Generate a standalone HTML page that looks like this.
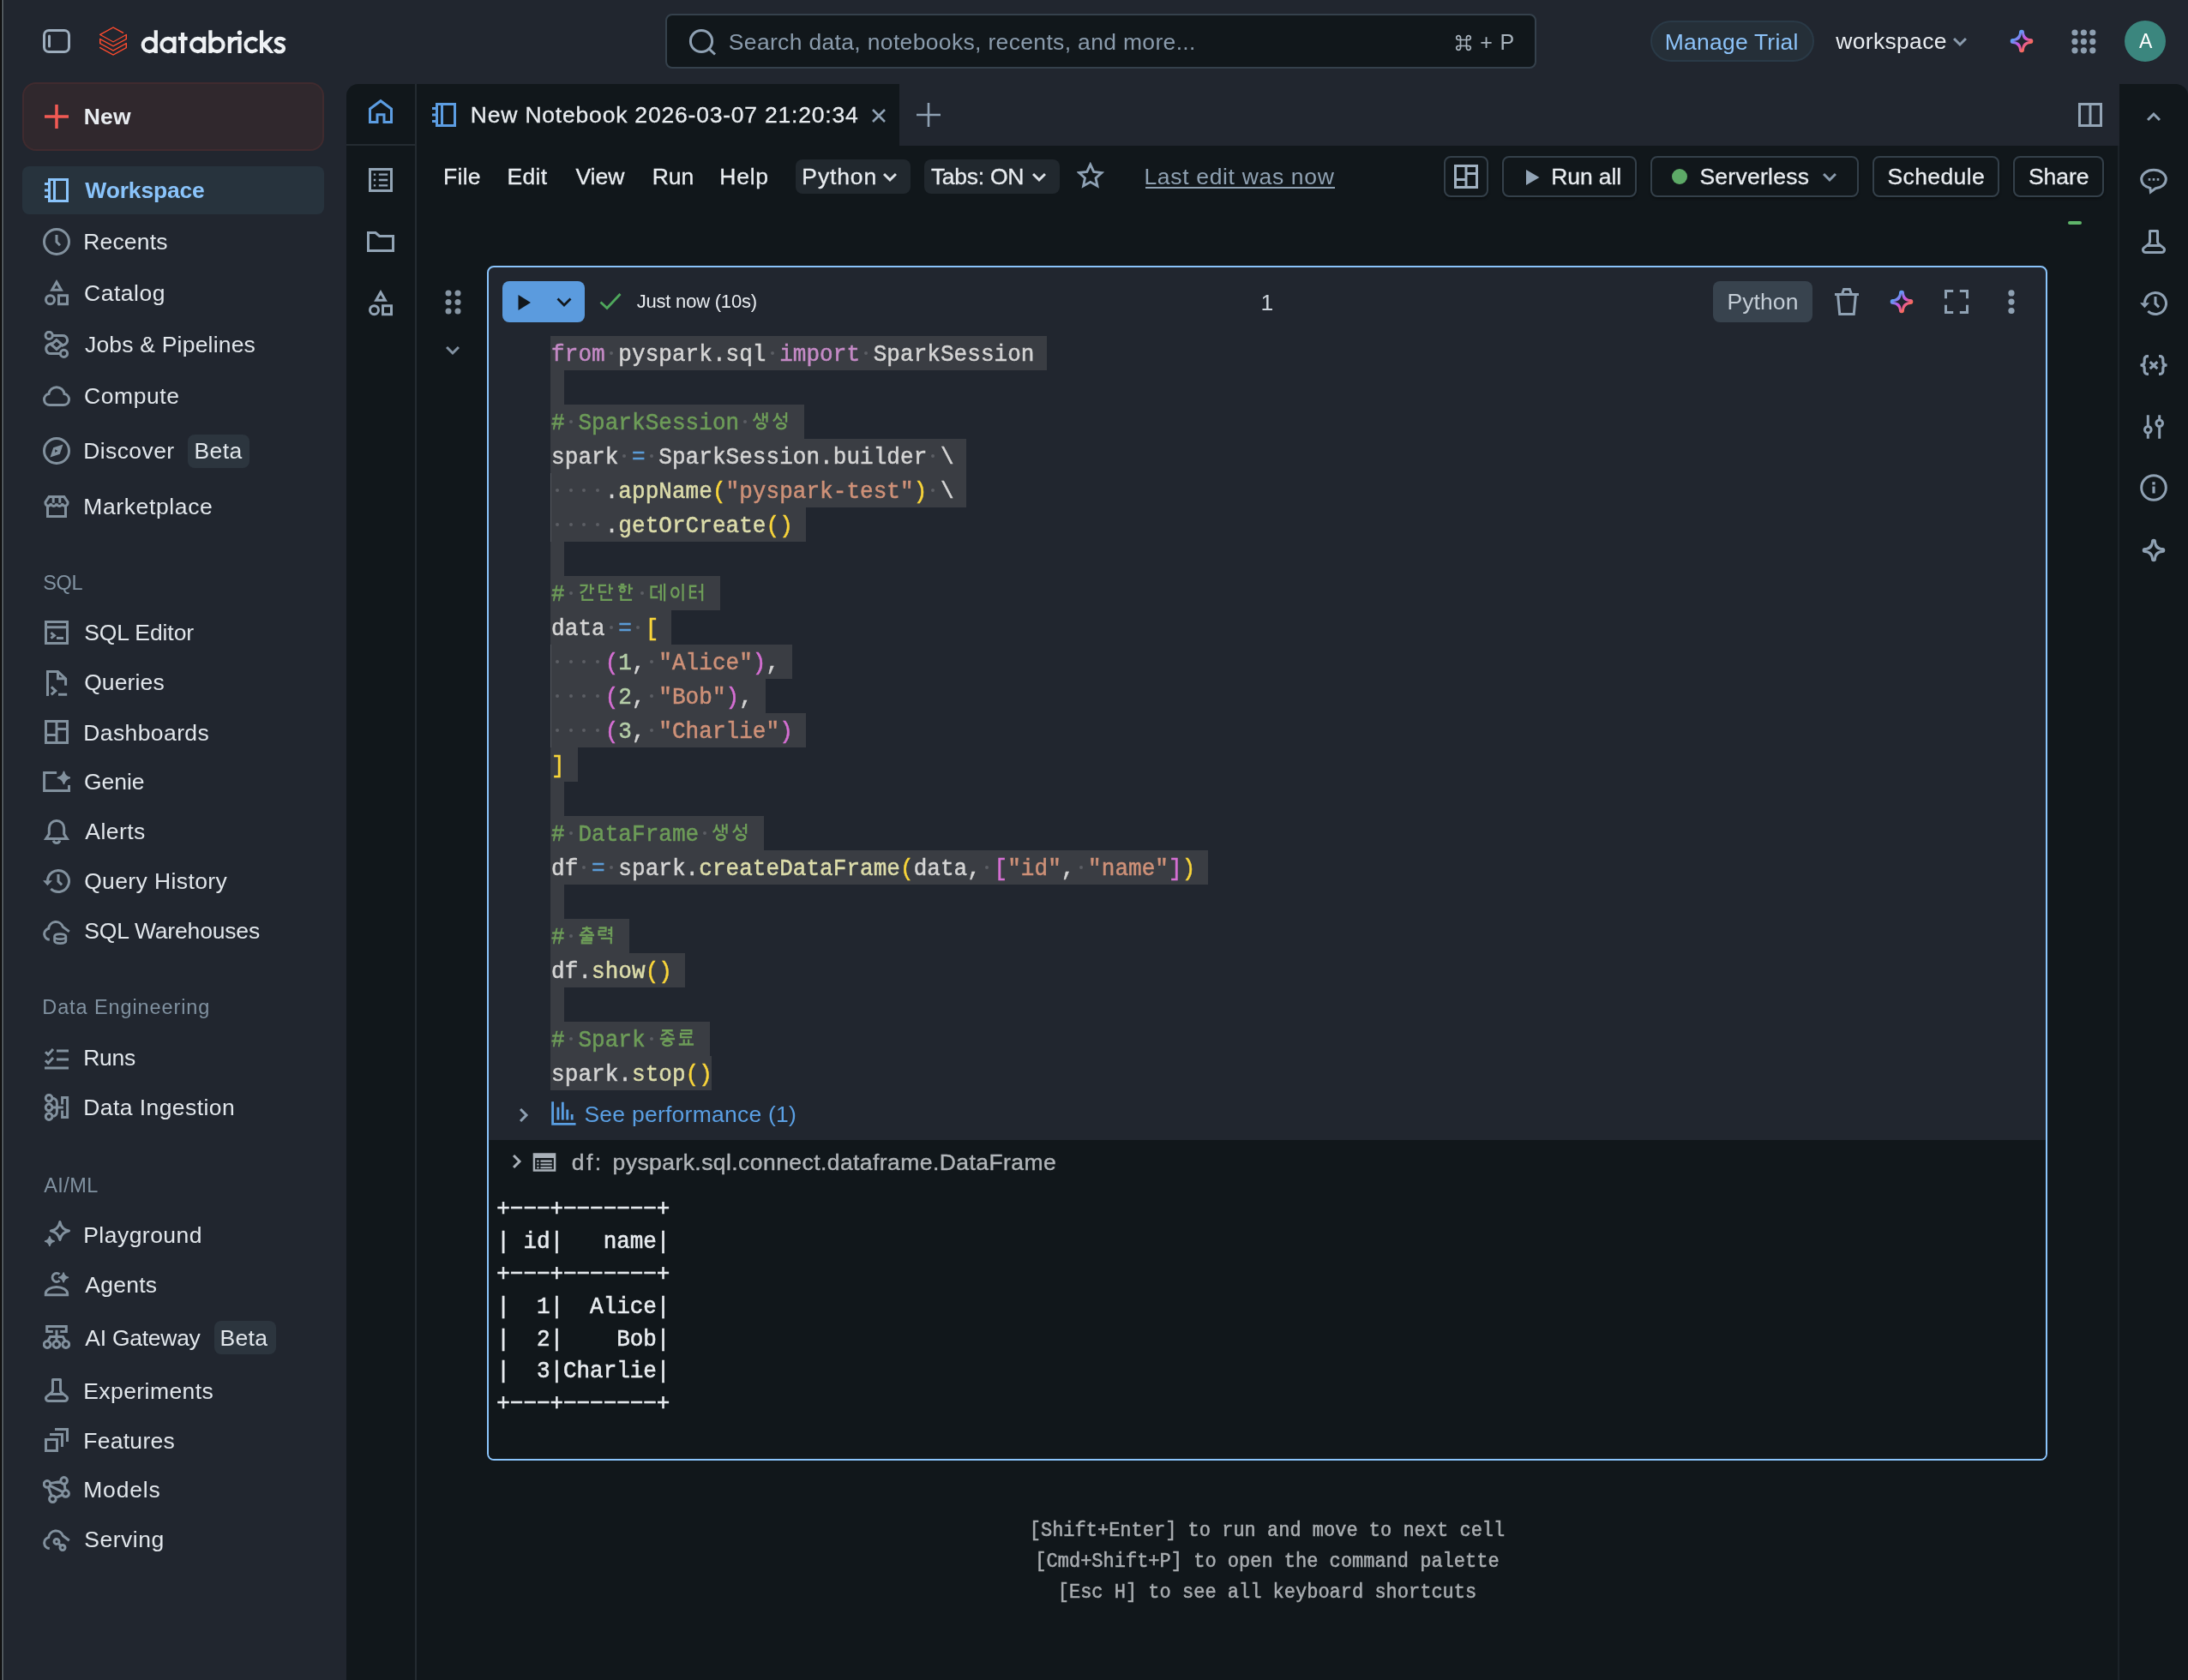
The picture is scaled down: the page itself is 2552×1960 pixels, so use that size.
<!DOCTYPE html>
<html><head><meta charset="utf-8"><title>Databricks Notebook</title><style>html,body{margin:0;padding:0}
body{width:2552px;height:1960px;background:#21262f;position:relative;overflow:hidden;font-family:"Liberation Sans",sans-serif;}
#r{position:absolute;left:0;top:0;width:2552px;height:1960px;will-change:transform;-webkit-font-smoothing:antialiased}
.t{position:absolute;white-space:pre;font-family:"Liberation Sans",sans-serif;}
.b{position:absolute;display:block}
.c{position:absolute;white-space:pre;font-family:"Liberation Mono",monospace;font-size:26px;line-height:40px;letter-spacing:0.047px;transform:scaleY(1.06);transform-origin:0 27px;-webkit-text-stroke:0.5px currentColor}
</style></head><body>
<div id="r">
<div class="b" style="left:0px;top:0px;width:1px;height:1960px;background:#161616;"></div>
<div class="b" style="left:1px;top:0px;width:1px;height:1960px;background:#000;"></div>
<div class="b" style="left:2px;top:0px;width:2px;height:1960px;background:#51585d;"></div>
<div class="b" style="left:404px;top:98px;width:2148px;height:1862px;background:#11171b;border-radius:14px 14px 0 0;"></div>
<div class="b" style="left:1049px;top:98px;width:1423px;height:72px;background:#21262f;"></div>
<div class="b" style="left:484px;top:98px;width:2px;height:1862px;background:#242b31;"></div>
<div class="b" style="left:404px;top:168px;width:80px;height:2px;background:#242b31;"></div>
<div class="b" style="left:2470px;top:170px;width:2px;height:1790px;background:#1c2329;"></div>
<svg class="b" style="left:50px;top:34px" width="32" height="28" fill="none"><rect x="1.5" y="1.5" width="29" height="25" rx="5.5" stroke="#9dadbd" stroke-width="3"/><path d="M7.5 8v12" stroke="#9dadbd" stroke-width="3" stroke-linecap="round"/></svg>
<svg class="b" style="left:116px;top:31px" width="32" height="34" viewBox="0 0 40.1 42"><path fill="#ff4b2e" d="M40.1,31.1v-7.4l-0.8-0.5L20.1,33.7l-18.2-10l0-4.3l18.2,9.9l20.1-10.9v-7.3l-0.8-0.5L20.1,21.2L2.6,11.6L20.1,2l14.1,7.7l1.1-0.6V8.3L20.1,0L0,10.9V12L20.1,23l18.2-10v4.4l-18.2,10L0.8,16.8L0,17.3v7.4l20.1,10.9l18.2-9.9v4.3l-18.2,10L0.8,29.5L0,30v1.1L20.1,42L40.1,31.1z"/></svg>
<svg class="b" style="left:160px;top:30px" width="180" height="38" viewBox="160 30 180 38" fill="none"><path d="M166.70000000000002 52.5a7.6 7.6 0 1 0 15.2 0a7.6 7.6 0 1 0 -15.2 0z M181.8 35.2V62.05 M188.4 52.5a7.6 7.6 0 1 0 15.2 0a7.6 7.6 0 1 0 -15.2 0z M203.5 42.8V62.05 M213.05 37.9V62.05 M207.9 44.9H218.7 M223.1 52.5a7.6 7.6 0 1 0 15.2 0a7.6 7.6 0 1 0 -15.2 0z M238.2 42.8V62.05 M245.4 35.2V62.05 M245.4 52.5a7.6 7.6 0 1 0 15.2 0a7.6 7.6 0 1 0 -15.2 0z M267.8 42.8V62.05 M267.8 52.5A7.6 7.6 0 0 1 277.3 45.15 M279.5 42.8V62.05 M299.75 47.41A7.6 7.6 0 1 0 299.75 57.59 M305.05 35.2V62.05 M331.9 47.3C331 45.6 329 44.8 326.6 44.8C323.8 44.8 321.85 46.2 321.85 48.3C321.85 50.4 323.6 51.3 326.6 52.2C329.8 53.1 331 54.3 331 56.6C331 59 329.1 60.5 326.3 60.5C323.6 60.5 321.6 59.4 320.7 57.3" stroke="#eef1f4" stroke-width="4.2"/><path d="M307 49.8L314.9 43.1H318.85L311.85 51.5L319.5 62.05H315.2L307 54.2Z" fill="#eef1f4"/><circle cx="279.5" cy="38.2" r="2.7" fill="#eef1f4"/></svg>
<div class="b" style="left:776px;top:16px;width:1016px;height:64px;background:#11171b;border-radius:8px;border:2px solid #35414c;box-sizing:border-box;"></div>
<svg class="b" style="left:800px;top:30px" width="40" height="40" viewBox="0 0 40 40" fill="none"><circle cx="18" cy="18" r="12.6" stroke="#8fa1b3" stroke-width="3"/><path d="M27 27l7 6.5" stroke="#8fa1b3" stroke-width="3"/></svg>
<div class="t" style="left:849.80px;top:35.66px;font-size:26.5px;line-height:26.5px;color:#8a9bac;letter-spacing:0.333px;">Search data, notebooks, recents, and more...</div>
<svg class="b" style="left:1697px;top:40px" width="20" height="20" viewBox="0 0 20 20" fill="none"><path d="M6.5 6.5h7v7h-7z M6.5 6.5h-2.2a2.4 2.4 0 1 1 2.2-2.3z M13.5 6.5v-2.3a2.4 2.4 0 1 1 2.3 2.3z M13.5 13.5h2.3a2.4 2.4 0 1 1-2.3 2.3z M6.5 13.5v2.3a2.4 2.4 0 1 1-2.2-2.3z" stroke="#a9b4be" stroke-width="1.7"/></svg>
<div class="t" style="left:1726.28px;top:37.13px;font-size:25px;line-height:25px;color:#a9b4be;">+</div>
<div class="t" style="left:1749.45px;top:37.13px;font-size:25px;line-height:25px;color:#a9b4be;">P</div>
<div class="b" style="left:1925px;top:24px;width:191px;height:48px;background:#252f38;border-radius:24px;border:2px solid #2a3a47;box-sizing:border-box;"></div>
<div class="t" style="left:1941.83px;top:35.86px;font-size:26.5px;line-height:26.5px;color:#8cc2f8;letter-spacing:0.209px;">Manage Trial</div>
<div class="t" style="left:2141.34px;top:35.36px;font-size:26.5px;line-height:26.5px;color:#e8ecf0;letter-spacing:0.309px;">workspace</div>
<svg class="b" style="left:2270.4px;top:33.2px;" width="32" height="32" viewBox="0 0 16 16" fill="none"><path d="M4.53 6.03L8 9.5l3.47-3.47" stroke="#8a9bad" stroke-width="1.5" stroke-linejoin="miter" /></svg>
<svg class="b" style="left:2342.2px;top:32.15px" width="32" height="32" viewBox="0 0 16 16" fill="none"><defs><linearGradient id="g1" x1="4.6" y1="4.6" x2="11.4" y2="11.4" gradientUnits="userSpaceOnUse"><stop offset="0.04" stop-color="#5f9cf4"/><stop offset=".28" stop-color="#8f78ee"/><stop offset=".5" stop-color="#c554e0"/><stop offset=".72" stop-color="#e45c9c"/><stop offset=".96" stop-color="#f86c5c"/></linearGradient></defs><path d="M9.50 2.85C9.50 4.78 11.22 6.50 13.15 6.50A1.5 1.5 0 0 1 13.15 9.50C11.22 9.50 9.50 11.22 9.50 13.15A1.5 1.5 0 0 1 6.50 13.15C6.50 11.22 4.78 9.50 2.85 9.50A1.5 1.5 0 0 1 2.85 6.50C4.78 6.50 6.50 4.78 6.50 2.85A1.5 1.5 0 0 1 9.50 2.85ZM8.00 3.10C8.40 6.50 9.50 7.60 12.90 8.00C9.50 8.40 8.40 9.50 8.00 12.90C7.60 9.50 6.50 8.40 3.10 8.00C6.50 7.60 7.60 6.50 8.00 3.10Z" fill="url(#g1)" fill-rule="evenodd"/></svg>
<svg class="b" style="left:2416px;top:34px" width="30" height="30" fill="#8e9fb1"><circle cx="4.0" cy="4.0" r="3.6"/><circle cx="4.0" cy="14.4" r="3.6"/><circle cx="4.0" cy="24.8" r="3.6"/><circle cx="14.4" cy="4.0" r="3.6"/><circle cx="14.4" cy="14.4" r="3.6"/><circle cx="14.4" cy="24.8" r="3.6"/><circle cx="24.8" cy="4.0" r="3.6"/><circle cx="24.8" cy="14.4" r="3.6"/><circle cx="24.8" cy="24.8" r="3.6"/></svg>
<div class="b" style="left:2478px;top:24px;width:48px;height:48px;background:#3b867e;border-radius:24px;"></div>
<div class="t" style="left:2494.96px;top:37.33px;font-size:23px;line-height:23px;color:#fff;">A</div>
<div class="b" style="left:26px;top:96px;width:352px;height:80px;background:#30282d;border-radius:16px;border:2px solid #402b2f;box-sizing:border-box;"></div>
<svg class="b" style="left:52px;top:122px" width="28" height="28" fill="none"><path d="M14 0v28M0 14h28" stroke="#f15a54" stroke-width="3.5"/></svg>
<div class="t" style="left:97.63px;top:122.96px;font-size:26.5px;line-height:26.5px;color:#e8ecf0;font-weight:700;letter-spacing:0.266px;">New</div>
<div class="b" style="left:26px;top:194px;width:352px;height:56px;background:#27333d;border-radius:8px;"></div>
<div class="t" style="left:99.37px;top:209.16px;font-size:26.5px;line-height:26.5px;color:#8ac4fb;font-weight:700;letter-spacing:-0.182px;">Workspace</div>
<svg class="b" style="left:50.0px;top:206.0px;" width="32" height="32" viewBox="0 0 16 16" fill="none"><path d="M3.75 1.75h10.5v12.5h-10.5z M6.75 1.75v12.5 M1 4.25h2.75 M1 8h2.75 M1 11.75h2.75" stroke="#8ac4fb" stroke-width="1.5" stroke-linejoin="miter" /></svg>
<div class="t" style="left:97.23px;top:269.46px;font-size:26.5px;line-height:26.5px;color:#e1e6eb;letter-spacing:0.170px;">Recents</div>
<svg class="b" style="left:50.0px;top:266.0px;" width="32" height="32" viewBox="0 0 16 16" fill="none"><path d="M0.75 8a7.25 7.25 0 1 0 14.5 0a7.25 7.25 0 1 0 -14.5 0z M8 4v4.1l2 2" stroke="#82919e" stroke-width="1.5" stroke-linejoin="miter" /></svg>
<div class="t" style="left:98.05px;top:329.46px;font-size:26.5px;line-height:26.5px;color:#e1e6eb;letter-spacing:0.502px;">Catalog</div>
<svg class="b" style="left:50.0px;top:325.0px;" width="32" height="32" viewBox="0 0 16 16" fill="none"><path d="M8 1.97L10.66 6.65H5.34z M1.75 12.35a2.5 2.5 0 1 0 5.0 0a2.5 2.5 0 1 0 -5.0 0z M9.25 9.85h5v5h-5z" stroke="#82919e" stroke-width="1.5" stroke-linejoin="miter" /></svg>
<div class="t" style="left:98.99px;top:389.36px;font-size:26.5px;line-height:26.5px;color:#e1e6eb;letter-spacing:0.197px;">Jobs &amp; Pipelines</div>
<svg class="b" style="left:50.0px;top:386.0px;" width="32" height="32" viewBox="0 0 16 16" fill="none"><path d="M1.55 2.7a2.05 2.05 0 1 0 4.1 0a2.05 2.05 0 1 0 -4.1 0zM10.20 13.2a2.05 2.05 0 1 0 4.1 0a2.05 2.05 0 1 0 -4.1 0z M5.65 2.7h5.9a2.75 2.75 0 0 1 1.2 5.2l-1.9 .9 M5.3 7.2l-1.9 .9a2.75 2.75 0 0 0 1.2 5.2h5.6 M8 5.3l3.1 2.7l-3.1 2.7l-3.1-2.7z" stroke="#82919e" stroke-width="1.5" stroke-linejoin="miter" /></svg>
<div class="t" style="left:98.05px;top:449.06px;font-size:26.5px;line-height:26.5px;color:#e1e6eb;letter-spacing:0.549px;">Compute</div>
<svg class="b" style="left:50.0px;top:446.0px;" width="32" height="32" viewBox="0 0 16 16" fill="none"><path d="M4 13.25a3.25 3.25 0 0 1-.55-6.45a4.6 4.6 0 0 1 9.1 0a3.25 3.25 0 0 1-.55 6.45z" stroke="#82919e" stroke-width="1.5" stroke-linejoin="miter" /></svg>
<div class="t" style="left:97.23px;top:513.16px;font-size:26.5px;line-height:26.5px;color:#e1e6eb;letter-spacing:0.405px;">Discover</div>
<svg class="b" style="left:50.0px;top:510.0px;" width="32" height="32" viewBox="0 0 16 16" fill="none"><path d="M0.75 8a7.25 7.25 0 1 0 14.5 0a7.25 7.25 0 1 0 -14.5 0z" stroke="#82919e" stroke-width="1.5" stroke-linejoin="miter" /><path d="M11.75 4.25L9.9 9.9L4.25 11.75L6.1 6.1z M7.1 7.1v1.9l1.6-.95z" fill="#82919e" fill-rule="evenodd"/></svg>
<div class="t" style="left:97.23px;top:577.56px;font-size:26.5px;line-height:26.5px;color:#e1e6eb;letter-spacing:0.621px;">Marketplace</div>
<svg class="b" style="left:50.0px;top:575.0px;" width="32" height="32" viewBox="0 0 16 16" fill="none"><path d="M2.75 7.6v6.15h10.5v-6.15 M3.6 2.3h8.8l2.1 3v.6a1.6 1.6 0 0 1-3.2.2a1.65 1.65 0 0 1-3.3 0a1.65 1.65 0 0 1-3.3 0a1.6 1.6 0 0 1-3.2-.2v-.6z M6.1 2.3v3.6 M9.9 2.3v3.6" stroke="#82919e" stroke-width="1.5" stroke-linejoin="miter" /></svg>
<div class="t" style="left:98.20px;top:725.26px;font-size:26.5px;line-height:26.5px;color:#e1e6eb;letter-spacing:-0.075px;">SQL Editor</div>
<svg class="b" style="left:50.0px;top:722.0px;" width="32" height="32" viewBox="0 0 16 16" fill="none"><path d="M1.75 1.75h12.5v12.5h-12.5z M1.75 4.85h12.5 M4.7 8.1l2 1.6l-2 1.6 M8 11.25h4" stroke="#82919e" stroke-width="1.5" stroke-linejoin="miter" /></svg>
<div class="t" style="left:98.14px;top:783.16px;font-size:26.5px;line-height:26.5px;color:#e1e6eb;letter-spacing:0.121px;">Queries</div>
<svg class="b" style="left:50.0px;top:781.0px;" width="32" height="32" viewBox="0 0 16 16" fill="none"><path d="M2.75 15.5V1.25h6L13.3 5.4v4 M8.75 1.25v4.15h4.55 M4.9 10.2l2.5 2.25l-2.5 2.25 M9 14.65h5.1" stroke="#82919e" stroke-width="1.5" stroke-linejoin="miter" /></svg>
<div class="t" style="left:97.23px;top:841.66px;font-size:26.5px;line-height:26.5px;color:#e1e6eb;letter-spacing:0.405px;">Dashboards</div>
<svg class="b" style="left:50.0px;top:838.0px;" width="32" height="32" viewBox="0 0 16 16" fill="none"><path d="M1.75 1.75h12.5v12.5h-12.5z M8 1.75v12.5 M1.75 9.7h6.25 M8 6.3h6.25" stroke="#82919e" stroke-width="1.5" stroke-linejoin="miter" /></svg>
<div class="t" style="left:98.07px;top:899.16px;font-size:26.5px;line-height:26.5px;color:#e1e6eb;letter-spacing:-0.076px;">Genie</div>
<svg class="b" style="left:50.0px;top:896.0px;" width="32" height="32" viewBox="0 0 16 16" fill="none"><path d="M8.05 2.8H.8v10.4h14.45v-3.15" stroke="#82919e" stroke-width="1.5" stroke-linejoin="miter" /><path d="M12.25 2.20C12.67 4.12 13.82 5.28 15.75 5.70C13.82 6.12 12.67 7.28 12.25 9.20C11.83 7.28 10.68 6.12 8.75 5.70C10.68 5.28 11.83 4.12 12.25 2.20Z" fill="#82919e" stroke="#82919e" stroke-width="0.9" stroke-linejoin="round"/></svg>
<div class="t" style="left:99.35px;top:957.16px;font-size:26.5px;line-height:26.5px;color:#e1e6eb;letter-spacing:0.414px;">Alerts</div>
<svg class="b" style="left:50.0px;top:955.0px;" width="32" height="32" viewBox="0 0 16 16" fill="none"><path d="M8 1.2a4.35 4.35 0 0 0-4.35 4.35v3.5l-1.8 2.65h12.3l-1.8-2.65v-3.5a4.35 4.35 0 0 0-4.35-4.35z M6.15 12.8a1.9 1.9 0 0 0 3.7 0" stroke="#82919e" stroke-width="1.5" stroke-linejoin="miter" /></svg>
<div class="t" style="left:98.14px;top:1015.06px;font-size:26.5px;line-height:26.5px;color:#e1e6eb;letter-spacing:0.386px;">Query History</div>
<svg class="b" style="left:50.0px;top:1012.0px;" width="32" height="32" viewBox="0 0 16 16" fill="none"><path d="M2.75 7.7a6.25 6.25 0 1 1 1.9 4.8 M9 4v4.2l2.05 2" stroke="#82919e" stroke-width="1.5" stroke-linejoin="miter" /><path d="M0 7.6h5.5l-2.8 3z" fill="#82919e" /></svg>
<div class="t" style="left:98.20px;top:1072.96px;font-size:26.5px;line-height:26.5px;color:#e1e6eb;letter-spacing:-0.169px;">SQL Warehouses</div>
<svg class="b" style="left:50.0px;top:1072.0px;" width="32" height="32" viewBox="0 0 16 16" fill="none"><path d="M3.9 12.1a3.3 3.3 0 0 1-.55-6.5a4.3 4.3 0 0 1 8.35-.9l3.7 2.75" stroke="#82919e" stroke-width="1.5" stroke-linejoin="miter" /><path d="M6.8 10.3c0-2 6.6-2 6.6 0v2.5c0 2-6.6 2-6.6 0z M6.8 10.5c0 1.8 6.6 1.8 6.6 0" stroke="#82919e" stroke-width="1.4" stroke-linejoin="miter" /></svg>
<div class="t" style="left:97.23px;top:1221.26px;font-size:26.5px;line-height:26.5px;color:#e1e6eb;letter-spacing:-0.244px;">Runs</div>
<svg class="b" style="left:50.0px;top:1218.5px;" width="32" height="32" viewBox="0 0 16 16" fill="none"><path d="M1.5 4.1l1.6 1.6l2.9-3.2 M1.5 9.1l1.6 1.6l2.9-3.2 M8 3.5h7 M8 8.5h7 M1 13.5h14" stroke="#82919e" stroke-width="1.5" stroke-linejoin="miter" /></svg>
<div class="t" style="left:97.23px;top:1279.16px;font-size:26.5px;line-height:26.5px;color:#e1e6eb;letter-spacing:0.431px;">Data Ingestion</div>
<svg class="b" style="left:50.0px;top:1276.0px;" width="32" height="32" viewBox="0 0 16 16" fill="none"><path d="M1.65 2.6a1.9 1.9 0 1 0 3.8 0a1.9 1.9 0 1 0 -3.8 0zM1.65 7.95a1.9 1.9 0 1 0 3.8 0a1.9 1.9 0 1 0 -3.8 0zM1.65 13.3a1.9 1.9 0 1 0 3.8 0a1.9 1.9 0 1 0 -3.8 0z M5.4 2.6c1.8 0 2.8 1.2 2.8 2.8v5.1c0 1.6-1 2.8-2.8 2.8 M5.45 7.95h6.5 M11.3 6.3v-4h3v11.4h-3v-4" stroke="#82919e" stroke-width="1.5" stroke-linejoin="miter" /></svg>
<div class="t" style="left:97.23px;top:1427.56px;font-size:26.5px;line-height:26.5px;color:#e1e6eb;letter-spacing:0.468px;">Playground</div>
<svg class="b" style="left:50.0px;top:1423.0px;" width="32" height="32" viewBox="0 0 16 16" fill="none"><path d="M9.95 1.20C10.48 4.12 12.33 5.97 15.25 6.50C12.33 7.03 10.48 8.88 9.95 11.80C9.42 8.88 7.56 7.03 4.65 6.50C7.56 5.97 9.42 4.12 9.95 1.20Z" stroke="#82919e" stroke-width="1.5" stroke-linejoin="round" stroke-linecap="round"/><path d="M3.95 9.95C4.26 11.38 5.12 12.24 6.55 12.55C5.12 12.86 4.26 13.72 3.95 15.15C3.64 13.72 2.78 12.86 1.35 12.55C2.78 12.24 3.64 11.38 3.95 9.95Z" fill="#82919e" stroke="#82919e" stroke-width="0.9" stroke-linejoin="round"/></svg>
<div class="t" style="left:99.35px;top:1485.56px;font-size:26.5px;line-height:26.5px;color:#e1e6eb;letter-spacing:0.241px;">Agents</div>
<svg class="b" style="left:50.0px;top:1482.0px;" width="32" height="32" viewBox="0 0 16 16" fill="none"><path d="M9.7 2.3a2.5 2.5 0 1 0 .1 3.7 M1.65 14.4v-.9c0-2 2.85-3.8 6.35-3.8s6.3 1.8 6.3 3.8v.9z" stroke="#82919e" stroke-width="1.5" stroke-linejoin="miter" /><path d="M12.05 1.60C12.36 3.03 13.22 3.89 14.65 4.20C13.22 4.51 12.36 5.37 12.05 6.80C11.74 5.37 10.88 4.51 9.45 4.20C10.88 3.89 11.74 3.03 12.05 1.60Z" fill="#82919e" stroke="#82919e" stroke-width="0.9" stroke-linejoin="round"/></svg>
<div class="t" style="left:99.35px;top:1547.56px;font-size:26.5px;line-height:26.5px;color:#e1e6eb;letter-spacing:-0.275px;">AI Gateway</div>
<svg class="b" style="left:50.0px;top:1544.0px;" width="32" height="32" viewBox="0 0 16 16" fill="none"><path d="M5.9 4.8h-3.55v-3.1h11.3v3.1h-3.55 M8 3.9v6.4 M2.9 10.4L4.3 7.8H11.7L13.1 10.4 M0.60 12.25a1.95 1.95 0 1 0 3.9 0a1.95 1.95 0 1 0 -3.9 0zM6.00 12.25a1.95 1.95 0 1 0 3.9 0a1.95 1.95 0 1 0 -3.9 0zM11.45 12.25a1.95 1.95 0 1 0 3.9 0a1.95 1.95 0 1 0 -3.9 0z" stroke="#82919e" stroke-width="1.5" stroke-linejoin="miter" /></svg>
<div class="t" style="left:97.23px;top:1609.96px;font-size:26.5px;line-height:26.5px;color:#e1e6eb;letter-spacing:0.425px;">Experiments</div>
<svg class="b" style="left:50.0px;top:1606.0px;" width="32" height="32" viewBox="0 0 16 16" fill="none"><path d="M5.75 1a.75.75 0 0 0-.75.75v6.089c0 .38-.173.739-.47.976l-2.678 2.143A2.27 2.27 0 0 0 3.27 15h9.46a2.27 2.27 0 0 0 1.418-4.042L11.47 8.815A1.25 1.25 0 0 1 11 7.839V1.75a.75.75 0 0 0-.75-.75h-4.5zm.75 6.839V2.5h3v5.339c0 .606.2 1.188.559 1.661H5.942A2.75 2.75 0 0 0 6.5 7.839zM4.2 11h7.6l1.41 1.13a.77.77 0 0 1-.48 1.37H3.27a.77.77 0 0 1-.48-1.37L4.2 11z" fill="#82919e" fill-rule="evenodd"/></svg>
<div class="t" style="left:97.23px;top:1667.56px;font-size:26.5px;line-height:26.5px;color:#e1e6eb;letter-spacing:0.279px;">Features</div>
<svg class="b" style="left:50.0px;top:1664.0px;" width="32" height="32" viewBox="0 0 16 16" fill="none"><path d="M1.75 7.75h6.5v6.5h-6.5z M4 4.75h7.25v7.25 M7 1.75h7.25v7.2" stroke="#82919e" stroke-width="1.5" stroke-linejoin="miter" /></svg>
<div class="t" style="left:97.23px;top:1725.46px;font-size:26.5px;line-height:26.5px;color:#e1e6eb;letter-spacing:0.821px;">Models</div>
<svg class="b" style="left:50.0px;top:1722.0px;" width="32" height="32" viewBox="0 0 16 16" fill="none"><path d="M0.60 4.7a1.9 1.9 0 1 0 3.8 0a1.9 1.9 0 1 0 -3.8 0zM10.40 2.7a1.9 1.9 0 1 0 3.8 0a1.9 1.9 0 1 0 -3.8 0zM11.40 10.2a1.9 1.9 0 1 0 3.8 0a1.9 1.9 0 1 0 -3.8 0zM3.80 13.35a1.9 1.9 0 1 0 3.8 0a1.9 1.9 0 1 0 -3.8 0z M4.35 4.3L10.45 3.1 M4.15 5.65L11.65 9.3 M3.15 6.5L5.05 11.55 M12.55 4.6L13.05 8.3 M7.5 12.65L11.5 10.95" stroke="#82919e" stroke-width="1.5" stroke-linejoin="miter" /></svg>
<div class="t" style="left:98.20px;top:1783.46px;font-size:26.5px;line-height:26.5px;color:#e1e6eb;letter-spacing:0.527px;">Serving</div>
<svg class="b" style="left:50.0px;top:1781.0px;" width="32" height="32" viewBox="0 0 16 16" fill="none"><path d="M3.9 12.8a3.3 3.3 0 0 1-.55-6.5a4.3 4.3 0 0 1 8.35-.9l3.7 2.75 M6.50 8.7a1.5 1.5 0 1 0 3.0 0a1.5 1.5 0 1 0 -3.0 0zM10.00 12.25a1.5 1.5 0 1 0 3.0 0a1.5 1.5 0 1 0 -3.0 0z M9.05 9.8l1.4 1.4" stroke="#82919e" stroke-width="1.5" stroke-linejoin="miter" /></svg>
<div class="t" style="left:50.13px;top:668.70px;font-size:23.5px;line-height:23.5px;color:#8192a1;letter-spacing:-0.238px;">SQL</div>
<div class="t" style="left:49.27px;top:1164.40px;font-size:23.5px;line-height:23.5px;color:#8192a1;letter-spacing:0.896px;">Data Engineering</div>
<div class="t" style="left:51.15px;top:1371.80px;font-size:23.5px;line-height:23.5px;color:#8192a1;letter-spacing:0.462px;">AI/ML</div>
<div class="b" style="left:219px;top:507px;width:72px;height:39px;background:#2c353e;border-radius:8px;"></div>
<div class="t" style="left:226.53px;top:513.16px;font-size:26.5px;line-height:26.5px;color:#e1e6eb;letter-spacing:0.387px;">Beta</div>
<div class="b" style="left:250px;top:1540.5px;width:72px;height:39px;background:#2c353e;border-radius:8px;"></div>
<div class="t" style="left:256.43px;top:1547.56px;font-size:26.5px;line-height:26.5px;color:#e1e6eb;letter-spacing:0.387px;">Beta</div>
<svg class="b" style="left:428.0px;top:114.0px;" width="32" height="32" viewBox="0 0 16 16" fill="none"><path d="M1.75 14.25V6.5L8 1.85l6.25 4.65v7.75H10V9.85H6v4.4z" stroke="#5c9de2" stroke-width="1.5" stroke-linejoin="miter" /></svg>
<svg class="b" style="left:428.0px;top:194.0px;" width="32" height="32" viewBox="0 0 16 16" fill="none"><path d="M1.75 1.75h12.5v12.5h-12.5z" stroke="#92a4b5" stroke-width="1.5" stroke-linejoin="miter" /><path d="M3.9 4.2h1.2v1.2h-1.2z M3.9 7.4h1.2v1.2h-1.2z M3.9 10.6h1.2v1.2h-1.2z M6.9 4.2h5.2v1.2h-5.2z M6.9 7.4h5.2v1.2h-5.2z M6.9 10.6h5.2v1.2h-5.2z" fill="#92a4b5" /></svg>
<svg class="b" style="left:428.0px;top:266.0px;" width="32" height="32" viewBox="0 0 16 16" fill="none"><path d="M.75 2.75H5L7.3 4.75H15.25V13.25H.75z" stroke="#92a4b5" stroke-width="1.5" stroke-linejoin="miter" /></svg>
<svg class="b" style="left:428.0px;top:337.0px;" width="32" height="32" viewBox="0 0 16 16" fill="none"><path d="M8 1.97L10.66 6.65H5.34z M1.75 12.35a2.5 2.5 0 1 0 5.0 0a2.5 2.5 0 1 0 -5.0 0z M9.25 9.85h5v5h-5z" stroke="#92a4b5" stroke-width="1.5" stroke-linejoin="miter" /></svg>
<svg class="b" style="left:502.0px;top:118.0px;" width="32" height="32" viewBox="0 0 16 16" fill="none"><path d="M3.75 1.75h10.5v12.5h-10.5z M6.75 1.75v12.5 M1 4.25h2.75 M1 8h2.75 M1 11.75h2.75" stroke="#5c9de2" stroke-width="1.5" stroke-linejoin="miter" /></svg>
<div class="t" style="left:548.83px;top:121.06px;font-size:26.5px;line-height:26.5px;color:#e8ecf0;letter-spacing:0.797px;-webkit-text-stroke:0.3px #e8ecf0;">New Notebook 2026-03-07 21:20:34</div>
<svg class="b" style="left:1017px;top:127px" width="16" height="16" fill="none"><path d="M1 1l14 14M15 1l-14 14" stroke="#8fa1b3" stroke-width="2.6"/></svg>
<svg class="b" style="left:1069px;top:120px" width="28" height="28" fill="none"><path d="M14 0v28M0 14h28" stroke="#8fa1b3" stroke-width="2.6"/></svg>
<svg class="b" style="left:2422.0px;top:118.0px;" width="32" height="32" viewBox="0 0 16 16" fill="none"><path d="M1.75 1.75h12.5v12.5h-12.5z M8 1.75v12.5" stroke="#94a5b6" stroke-width="1.5" stroke-linejoin="miter" /></svg>
<div class="t" style="left:517.03px;top:193.36px;font-size:26.5px;line-height:26.5px;color:#e8ecf0;letter-spacing:0.284px;-webkit-text-stroke:0.3px #e8ecf0;">File</div>
<div class="t" style="left:591.43px;top:193.36px;font-size:26.5px;line-height:26.5px;color:#e8ecf0;letter-spacing:0.368px;-webkit-text-stroke:0.3px #e8ecf0;">Edit</div>
<div class="t" style="left:671.38px;top:193.36px;font-size:26.5px;line-height:26.5px;color:#e8ecf0;-webkit-text-stroke:0.3px #e8ecf0;">View</div>
<div class="t" style="left:760.73px;top:193.36px;font-size:26.5px;line-height:26.5px;color:#e8ecf0;letter-spacing:-0.059px;-webkit-text-stroke:0.3px #e8ecf0;">Run</div>
<div class="t" style="left:839.33px;top:193.36px;font-size:26.5px;line-height:26.5px;color:#e8ecf0;letter-spacing:0.729px;-webkit-text-stroke:0.3px #e8ecf0;">Help</div>
<div class="b" style="left:928px;top:186px;width:134px;height:40px;background:#21282e;border-radius:8px;"></div>
<div class="t" style="left:935.33px;top:193.36px;font-size:26.5px;line-height:26.5px;color:#e8ecf0;letter-spacing:0.879px;-webkit-text-stroke:0.3px #e8ecf0;">Python</div>
<svg class="b" style="left:1022.3px;top:191.2px;" width="32" height="32" viewBox="0 0 16 16" fill="none"><path d="M4.53 6.03L8 9.5l3.47-3.47" stroke="#dde2e7" stroke-width="1.5" stroke-linejoin="miter" /></svg>
<div class="b" style="left:1078px;top:186px;width:158px;height:40px;background:#21282e;border-radius:8px;"></div>
<div class="t" style="left:1085.90px;top:193.36px;font-size:26.5px;line-height:26.5px;color:#e8ecf0;letter-spacing:-0.276px;-webkit-text-stroke:0.3px #e8ecf0;">Tabs: ON</div>
<svg class="b" style="left:1196.2px;top:191.2px;" width="32" height="32" viewBox="0 0 16 16" fill="none"><path d="M4.53 6.03L8 9.5l3.47-3.47" stroke="#dde2e7" stroke-width="1.5" stroke-linejoin="miter" /></svg>
<svg class="b" style="left:1256.2px;top:189.3px;" width="31.5" height="31.5" viewBox="0 0 16 16" fill="none"><path d="M8 1.5l2 4.3l4.7.55l-3.5 3.2l.95 4.65L8 11.85L3.85 14.2l.95-4.65l-3.5-3.2L6 5.8z" stroke="#8fa2b5" stroke-width="1.45" stroke-linejoin="miter" stroke-linejoin="round"/></svg>
<div class="t" style="left:1334.43px;top:193.36px;font-size:26.5px;line-height:26.5px;color:#8fa1b2;letter-spacing:0.673px;">Last edit was now</div>
<div class="b" style="left:1336px;top:218px;width:221px;height:2px;background:#8fa1b2;"></div>
<div class="b" style="left:1684px;top:182px;width:52px;height:48px;border-radius:8px;border:2px solid #34404a;box-sizing:border-box;box-shadow:0 2px 3px rgba(0,0,0,.35);"></div>
<svg class="b" style="left:1694.0px;top:190.0px;" width="32" height="32" viewBox="0 0 16 16" fill="none"><path d="M1.75 1.75h12.5v12.5h-12.5z M8 1.75v12.5 M1.75 9.7h6.25 M8 6.3h6.25" stroke="#a0b1c1" stroke-width="1.5" stroke-linejoin="miter" /></svg>
<div class="b" style="left:1752px;top:182px;width:157px;height:48px;border-radius:8px;border:2px solid #34404a;box-sizing:border-box;box-shadow:0 2px 3px rgba(0,0,0,.35);"></div>
<svg class="b" style="left:1779px;top:197px" width="18" height="20"><path d="M1 1l15.5 9l-15.5 9z" fill="#93a5b7"/></svg>
<div class="t" style="left:1809.23px;top:193.36px;font-size:26.5px;line-height:26.5px;color:#e8ecf0;letter-spacing:-0.090px;-webkit-text-stroke:0.3px #e8ecf0;">Run all</div>
<div class="b" style="left:1925px;top:182px;width:243px;height:48px;border-radius:8px;border:2px solid #34404a;box-sizing:border-box;box-shadow:0 2px 3px rgba(0,0,0,.35);"></div>
<div class="b" style="left:1950px;top:197px;width:18px;height:18px;background:#5daa67;border-radius:9px;"></div>
<div class="t" style="left:1982.40px;top:193.36px;font-size:26.5px;line-height:26.5px;color:#e8ecf0;letter-spacing:0.265px;-webkit-text-stroke:0.3px #e8ecf0;">Serverless</div>
<svg class="b" style="left:2118.1px;top:191.2px;" width="32" height="32" viewBox="0 0 16 16" fill="none"><path d="M4.53 6.03L8 9.5l3.47-3.47" stroke="#8a9bad" stroke-width="1.5" stroke-linejoin="miter" /></svg>
<div class="b" style="left:2184px;top:182px;width:148px;height:48px;border-radius:8px;border:2px solid #34404a;box-sizing:border-box;box-shadow:0 2px 3px rgba(0,0,0,.35);"></div>
<div class="t" style="left:2201.40px;top:193.36px;font-size:26.5px;line-height:26.5px;color:#e8ecf0;letter-spacing:0.411px;-webkit-text-stroke:0.3px #e8ecf0;">Schedule</div>
<div class="b" style="left:2348px;top:182px;width:106px;height:48px;border-radius:8px;border:2px solid #34404a;box-sizing:border-box;box-shadow:0 2px 3px rgba(0,0,0,.35);"></div>
<div class="t" style="left:2366.00px;top:193.36px;font-size:26.5px;line-height:26.5px;color:#e8ecf0;letter-spacing:-0.083px;-webkit-text-stroke:0.3px #e8ecf0;">Share</div>
<div class="b" style="left:2412px;top:258px;width:16px;height:4px;background:#5fb56a;border-radius:2px;"></div>
<svg class="b" style="left:2496.0px;top:120.3px;" width="32" height="32" viewBox="0 0 16 16" fill="none"><path d="M4.53 9.97L8 6.5l3.47 3.47" stroke="#8fa1b3" stroke-width="1.5" stroke-linejoin="miter" /></svg>
<svg class="b" style="left:2496.0px;top:194.6px;" width="32" height="32" viewBox="0 0 16 16" fill="none"><path d="M8 1.65c-4 0-7.15 2.4-7.15 5.4c0 2.5 2.1 4.5 5.1 5.15l.25 2.3l2.9-2.1c3.4-.35 6.05-2.5 6.05-5.35c0-3-3.15-5.4-7.15-5.4z" stroke="#8fa1b3" stroke-width="1.5" stroke-linejoin="miter" /><path d="M4.85 6.55h1.3v1.3h-1.3z M7.35 6.55h1.3v1.3h-1.3z M9.85 6.55h1.3v1.3h-1.3z" fill="#8fa1b3" /></svg>
<svg class="b" style="left:2496.0px;top:266.0px;" width="32" height="32" viewBox="0 0 16 16" fill="none"><path d="M5.75 1a.75.75 0 0 0-.75.75v6.089c0 .38-.173.739-.47.976l-2.678 2.143A2.27 2.27 0 0 0 3.27 15h9.46a2.27 2.27 0 0 0 1.418-4.042L11.47 8.815A1.25 1.25 0 0 1 11 7.839V1.75a.75.75 0 0 0-.75-.75h-4.5zm.75 6.839V2.5h3v5.339c0 .606.2 1.188.559 1.661H5.942A2.75 2.75 0 0 0 6.5 7.839zM4.2 11h7.6l1.41 1.13a.77.77 0 0 1-.48 1.37H3.27a.77.77 0 0 1-.48-1.37L4.2 11z" fill="#8fa1b3" fill-rule="evenodd"/></svg>
<svg class="b" style="left:2496.0px;top:338.0px;" width="32" height="32" viewBox="0 0 16 16" fill="none"><path d="M2.75 7.7a6.25 6.25 0 1 1 1.9 4.8 M9 4v4.2l2.05 2" stroke="#8fa1b3" stroke-width="1.5" stroke-linejoin="miter" /><path d="M0 7.6h5.5l-2.8 3z" fill="#8fa1b3" /></svg>
<svg class="b" style="left:2496.0px;top:410.0px;" width="32" height="32" viewBox="0 0 16 16" fill="none"><path d="M5 2.85h-.8a1.6 1.6 0 0 0-1.6 1.6v1.7c0 1-.7 1.85-2.4 1.85c1.7 0 2.4 .85 2.4 1.85v1.7a1.6 1.6 0 0 0 1.6 1.6h.8 M11 2.85h.8a1.6 1.6 0 0 1 1.6 1.6v1.7c0 1 .7 1.85 2.4 1.85c-1.7 0-2.4 .85-2.4 1.85v1.7a1.6 1.6 0 0 1-1.6 1.6h-.8 M5.85 6.1l4.3 4 M10.15 6.1l-4.3 4" stroke="#8fa1b3" stroke-width="1.6" stroke-linejoin="miter" /></svg>
<svg class="b" style="left:2496.0px;top:482.0px;" width="32" height="32" viewBox="0 0 16 16" fill="none"><path d="M4.65 1.1v6.6 M4.65 11.6v3.25 M2.75 9.65a1.9 1.9 0 1 0 3.8 0a1.9 1.9 0 1 0 -3.8 0z M11.35 1.1v2.8 M11.35 7.8v7.05 M9.45 5.85a1.9 1.9 0 1 0 3.8 0a1.9 1.9 0 1 0 -3.8 0z" stroke="#8fa1b3" stroke-width="1.5" stroke-linejoin="miter" /></svg>
<svg class="b" style="left:2496.0px;top:553.0px;" width="32" height="32" viewBox="0 0 16 16" fill="none"><path d="M0.85 8a7.15 7.15 0 1 0 14.3 0a7.15 7.15 0 1 0 -14.3 0z" stroke="#8fa1b3" stroke-width="1.5" stroke-linejoin="miter" /><path d="M7.2 7.25h1.6v4h-1.6z M7.15 4.65h1.7v1.6h-1.7z" fill="#8fa1b3" /></svg>
<svg class="b" style="left:2496.0px;top:626.0px;" width="32" height="32" viewBox="0 0 16 16" fill="none"><path d="M9.50 2.85C9.50 4.78 11.22 6.50 13.15 6.50A1.5 1.5 0 0 1 13.15 9.50C11.22 9.50 9.50 11.22 9.50 13.15A1.5 1.5 0 0 1 6.50 13.15C6.50 11.22 4.78 9.50 2.85 9.50A1.5 1.5 0 0 1 2.85 6.50C4.78 6.50 6.50 4.78 6.50 2.85A1.5 1.5 0 0 1 9.50 2.85ZM8.00 3.10C8.40 6.50 9.50 7.60 12.90 8.00C9.50 8.40 8.40 9.50 8.00 12.90C7.60 9.50 6.50 8.40 3.10 8.00C6.50 7.60 7.60 6.50 8.00 3.10Z" fill="#8fa1b3" fill-rule="evenodd"/></svg>
<div class="b" style="left:568px;top:310px;width:1820px;height:1394px;background:#21262f;border-radius:8px;border:2px solid #8ac4fb;box-sizing:border-box;"></div>
<div class="b" style="left:570px;top:1330px;width:1816px;height:372px;background:#11171b;border-radius:0 0 6px 6px;"></div>
<svg class="b" style="left:518.5px;top:337.5px" width="20" height="30" fill="#8796a4"><circle cx="4" cy="4.0" r="3.5"/><circle cx="4" cy="14.5" r="3.5"/><circle cx="4" cy="25.0" r="3.5"/><circle cx="15" cy="4.0" r="3.5"/><circle cx="15" cy="14.5" r="3.5"/><circle cx="15" cy="25.0" r="3.5"/></svg>
<svg class="b" style="left:512.0px;top:393.1px;" width="32" height="32" viewBox="0 0 16 16" fill="none"><path d="M4.53 6.03L8 9.5l3.47-3.47" stroke="#8292a2" stroke-width="1.5" stroke-linejoin="miter" /></svg>
<div class="b" style="left:586px;top:328px;width:96px;height:48px;background:#5b9bde;border-radius:8px;"></div>
<svg class="b" style="left:603px;top:343px" width="18" height="20"><path d="M1.5 1l14.5 9l-14.5 9z" fill="#11171c"/></svg>
<svg class="b" style="left:649px;top:346px" width="18" height="14" fill="none"><path d="M1.5 2.5l7.5 7.5l7.5-7.5" stroke="#11171c" stroke-width="2.8"/></svg>
<svg class="b" style="left:698px;top:341px" width="28" height="22" fill="none"><path d="M2.5 11.5l7.5 7l15.5-16.5" stroke="#4fa85c" stroke-width="2.8"/></svg>
<div class="t" style="left:742.66px;top:340.97px;font-size:22px;line-height:22px;color:#e8ecf0;letter-spacing:-0.204px;">Just now (10s)</div>
<div class="t" style="left:1470.48px;top:339.56px;font-size:26.5px;line-height:26.5px;color:#cdd4db;">1</div>
<div class="b" style="left:1998px;top:328px;width:116px;height:48px;background:#38434e;border-radius:8px;"></div>
<div class="t" style="left:2014.53px;top:338.76px;font-size:26.5px;line-height:26.5px;color:#c3ccd5;letter-spacing:0.079px;">Python</div>
<svg class="b" style="left:2138.0px;top:336.0px;" width="32" height="32" viewBox="0 0 16 16" fill="none"><path d="M1 3.75h14 M5.2 3.75L6.3.75h3.4l1.1 3 M2.8 3.75l1.05 11.5h8.3l1.05-11.5" stroke="#8fa1b3" stroke-width="1.5" stroke-linejoin="miter" /></svg>
<svg class="b" style="left:2202px;top:336px" width="32" height="32" viewBox="0 0 16 16" fill="none"><defs><linearGradient id="g2" x1="4.6" y1="4.6" x2="11.4" y2="11.4" gradientUnits="userSpaceOnUse"><stop offset="0.04" stop-color="#5f9cf4"/><stop offset=".28" stop-color="#8f78ee"/><stop offset=".5" stop-color="#c554e0"/><stop offset=".72" stop-color="#e45c9c"/><stop offset=".96" stop-color="#f86c5c"/></linearGradient></defs><path d="M9.50 2.85C9.50 4.78 11.22 6.50 13.15 6.50A1.5 1.5 0 0 1 13.15 9.50C11.22 9.50 9.50 11.22 9.50 13.15A1.5 1.5 0 0 1 6.50 13.15C6.50 11.22 4.78 9.50 2.85 9.50A1.5 1.5 0 0 1 2.85 6.50C4.78 6.50 6.50 4.78 6.50 2.85A1.5 1.5 0 0 1 9.50 2.85ZM8.00 3.10C8.40 6.50 9.50 7.60 12.90 8.00C9.50 8.40 8.40 9.50 8.00 12.90C7.60 9.50 6.50 8.40 3.10 8.00C6.50 7.60 7.60 6.50 8.00 3.10Z" fill="url(#g2)" fill-rule="evenodd"/></svg>
<svg class="b" style="left:2266.0px;top:336.0px;" width="32" height="32" viewBox="0 0 16 16" fill="none"><path d="M1.75 6.1V1.75H6.1 M9.9 1.75h4.35V6.1 M14.25 9.9v4.35H9.9 M6.1 14.25H1.75V9.9" stroke="#8fa1b3" stroke-width="1.5" stroke-linejoin="miter" /></svg>
<svg class="b" style="left:2341px;top:338px" width="10" height="28" fill="#8fa1b3"><circle cx="5" cy="3.9" r="3.6"/><circle cx="5" cy="14.1" r="3.6"/><circle cx="5" cy="24.5" r="3.6"/></svg>
<div class="b" style="left:641.8px;top:392px;width:579.6px;height:40px;background:#3a3d43;"></div>
<div class="c" style="left:643.10px;top:393.6px;color:#c58ac6;">from</div>
<div class="b" style="left:710.7px;top:410.3px;width:4px;height:4px;background:#5b5e64;border-radius:2px;"></div>
<div class="b" style="left:898.5px;top:410.3px;width:4px;height:4px;background:#5b5e64;border-radius:2px;"></div>
<div class="c" style="left:705.70px;top:393.6px;color:#d4d4d4;"> pyspark.sql </div>
<div class="c" style="left:909.15px;top:393.6px;color:#c58ac6;">import</div>
<div class="b" style="left:1008.1px;top:410.3px;width:4px;height:4px;background:#5b5e64;border-radius:2px;"></div>
<div class="c" style="left:1003.05px;top:393.6px;color:#d4d4d4;"> SparkSession</div>
<div class="b" style="left:641.8px;top:432px;width:16.1px;height:40px;background:#3a3d43;"></div>
<div class="b" style="left:641.8px;top:472px;width:295.9px;height:40px;background:#3a3d43;"></div>
<div class="b" style="left:663.8px;top:490.3px;width:4px;height:4px;background:#5b5e64;border-radius:2px;"></div>
<div class="b" style="left:867.2px;top:490.3px;width:4px;height:4px;background:#5b5e64;border-radius:2px;"></div>
<div class="c" style="left:643.10px;top:473.6px;color:#6d9c58;"># SparkSession </div>
<svg class="b" style="left:877.30px;top:480.20px" width="20.8" height="22.4" viewBox="-4 -4 108 108" preserveAspectRatio="none" fill="none"><path d="M27 5 C27 28 18 41 4 49 M27 21 C31 34 40 43 51 47 M63 5 V53 M87 1 V57 M63 28 H87 M52 62 A25 16 0 1 0 52.1 62 Z" stroke="#6d9c58" stroke-width="11.5" stroke-linejoin="miter"/></svg>
<svg class="b" style="left:899.80px;top:480.20px" width="20.8" height="22.4" viewBox="-4 -4 108 108" preserveAspectRatio="none" fill="none"><path d="M31 5 C31 28 21 42 5 50 M31 21 C36 34 46 43 59 48 M85 1 V57 M63 27 H85 M54 62 A26 16 0 1 0 54.1 62 Z" stroke="#6d9c58" stroke-width="11.5" stroke-linejoin="miter"/></svg>
<div class="b" style="left:641.8px;top:512px;width:485.6px;height:40px;background:#3a3d43;"></div>
<div class="b" style="left:726.4px;top:530.3px;width:4px;height:4px;background:#5b5e64;border-radius:2px;"></div>
<div class="c" style="left:643.10px;top:513.6px;color:#d4d4d4;">spark </div>
<div class="c" style="left:737.00px;top:513.6px;color:#5b9bd6;">=</div>
<div class="b" style="left:757.7px;top:530.3px;width:4px;height:4px;background:#5b5e64;border-radius:2px;"></div>
<div class="b" style="left:1086.3px;top:530.3px;width:4px;height:4px;background:#5b5e64;border-radius:2px;"></div>
<div class="c" style="left:752.65px;top:513.6px;color:#d4d4d4;"> SparkSession.builder \</div>
<div class="b" style="left:641.8px;top:552px;width:485.6px;height:40px;background:#3a3d43;"></div>
<div class="b" style="left:641.8px;top:552px;width:1.5px;height:40px;background:#55585e;"></div>
<div class="b" style="left:648.1px;top:570.3px;width:4px;height:4px;background:#5b5e64;border-radius:2px;"></div>
<div class="b" style="left:663.8px;top:570.3px;width:4px;height:4px;background:#5b5e64;border-radius:2px;"></div>
<div class="b" style="left:679.4px;top:570.3px;width:4px;height:4px;background:#5b5e64;border-radius:2px;"></div>
<div class="b" style="left:695.1px;top:570.3px;width:4px;height:4px;background:#5b5e64;border-radius:2px;"></div>
<div class="c" style="left:643.10px;top:553.6px;color:#d4d4d4;">    .</div>
<div class="c" style="left:721.35px;top:553.6px;color:#dcdcaa;">appName</div>
<div class="c" style="left:830.90px;top:553.6px;color:#f9d53a;">(</div>
<div class="c" style="left:846.55px;top:553.6px;color:#ce9178;">&quot;pyspark-test&quot;</div>
<div class="c" style="left:1065.65px;top:553.6px;color:#f9d53a;">)</div>
<div class="b" style="left:1086.3px;top:570.3px;width:4px;height:4px;background:#5b5e64;border-radius:2px;"></div>
<div class="c" style="left:1081.30px;top:553.6px;color:#d4d4d4;"> \</div>
<div class="b" style="left:641.8px;top:592px;width:297.8px;height:40px;background:#3a3d43;"></div>
<div class="b" style="left:641.8px;top:592px;width:1.5px;height:40px;background:#55585e;"></div>
<div class="b" style="left:648.1px;top:610.3px;width:4px;height:4px;background:#5b5e64;border-radius:2px;"></div>
<div class="b" style="left:663.8px;top:610.3px;width:4px;height:4px;background:#5b5e64;border-radius:2px;"></div>
<div class="b" style="left:679.4px;top:610.3px;width:4px;height:4px;background:#5b5e64;border-radius:2px;"></div>
<div class="b" style="left:695.1px;top:610.3px;width:4px;height:4px;background:#5b5e64;border-radius:2px;"></div>
<div class="c" style="left:643.10px;top:593.6px;color:#d4d4d4;">    .</div>
<div class="c" style="left:721.35px;top:593.6px;color:#dcdcaa;">getOrCreate</div>
<div class="c" style="left:893.50px;top:593.6px;color:#f9d53a;">()</div>
<div class="b" style="left:641.8px;top:632px;width:16.1px;height:40px;background:#3a3d43;"></div>
<div class="b" style="left:641.8px;top:672px;width:198.1px;height:40px;background:#3a3d43;"></div>
<div class="b" style="left:663.8px;top:690.3px;width:4px;height:4px;background:#5b5e64;border-radius:2px;"></div>
<div class="c" style="left:643.10px;top:673.6px;color:#6d9c58;"># </div>
<svg class="b" style="left:673.85px;top:680.20px" width="20.8" height="22.4" viewBox="-4 -4 108 108" preserveAspectRatio="none" fill="none"><path d="M9 10 H51 C51 30 38 44 10 53 M74 2 V60 M74 28 H95 M24 64 V92 H90" stroke="#6d9c58" stroke-width="11.5" stroke-linejoin="miter"/></svg>
<svg class="b" style="left:696.35px;top:680.20px" width="20.8" height="22.4" viewBox="-4 -4 108 108" preserveAspectRatio="none" fill="none"><path d="M53 10 H12 V47 H55 M74 2 V60 M74 28 H95 M24 64 V92 H90" stroke="#6d9c58" stroke-width="11.5" stroke-linejoin="miter"/></svg>
<svg class="b" style="left:718.85px;top:680.20px" width="20.8" height="22.4" viewBox="-4 -4 108 108" preserveAspectRatio="none" fill="none"><path d="M20 5 H44 M6 17 H58 M32 25 A15 11 0 1 0 32.1 25 Z M74 2 V60 M74 28 H95 M24 64 V92 H90" stroke="#6d9c58" stroke-width="11.5" stroke-linejoin="miter"/></svg>
<div class="b" style="left:746.9px;top:690.3px;width:4px;height:4px;background:#5b5e64;border-radius:2px;"></div>
<svg class="b" style="left:757.00px;top:680.20px" width="20.8" height="22.4" viewBox="-4 -4 108 108" preserveAspectRatio="none" fill="none"><path d="M48 18 H9 V78 H50 M68 4 V96 M90 0 V100 M50 46 H68" stroke="#6d9c58" stroke-width="11.5" stroke-linejoin="miter"/></svg>
<svg class="b" style="left:779.50px;top:680.20px" width="20.8" height="22.4" viewBox="-4 -4 108 108" preserveAspectRatio="none" fill="none"><path d="M34 24 A22 26 0 1 0 34.1 24 Z M82 1 V99" stroke="#6d9c58" stroke-width="11.5" stroke-linejoin="miter"/></svg>
<svg class="b" style="left:802.00px;top:680.20px" width="20.8" height="22.4" viewBox="-4 -4 108 108" preserveAspectRatio="none" fill="none"><path d="M50 14 H11 V80 H52 M11 46 H48 M85 1 V99 M62 46 H85" stroke="#6d9c58" stroke-width="11.5" stroke-linejoin="miter"/></svg>
<div class="b" style="left:641.8px;top:712px;width:141.4px;height:40px;background:#3a3d43;"></div>
<div class="b" style="left:710.7px;top:730.3px;width:4px;height:4px;background:#5b5e64;border-radius:2px;"></div>
<div class="c" style="left:643.10px;top:713.6px;color:#d4d4d4;">data </div>
<div class="c" style="left:721.35px;top:713.6px;color:#5b9bd6;">=</div>
<div class="b" style="left:742.0px;top:730.3px;width:4px;height:4px;background:#5b5e64;border-radius:2px;"></div>
<div class="c" style="left:752.65px;top:713.6px;color:#f9d53a;">[</div>
<div class="b" style="left:641.8px;top:752px;width:282.2px;height:40px;background:#3a3d43;"></div>
<div class="b" style="left:641.8px;top:752px;width:1.5px;height:40px;background:#55585e;"></div>
<div class="b" style="left:648.1px;top:770.3px;width:4px;height:4px;background:#5b5e64;border-radius:2px;"></div>
<div class="b" style="left:663.8px;top:770.3px;width:4px;height:4px;background:#5b5e64;border-radius:2px;"></div>
<div class="b" style="left:679.4px;top:770.3px;width:4px;height:4px;background:#5b5e64;border-radius:2px;"></div>
<div class="b" style="left:695.1px;top:770.3px;width:4px;height:4px;background:#5b5e64;border-radius:2px;"></div>
<div class="c" style="left:705.70px;top:753.6px;color:#d56fd3;">(</div>
<div class="c" style="left:721.35px;top:753.6px;color:#b5cea8;">1</div>
<div class="b" style="left:757.7px;top:770.3px;width:4px;height:4px;background:#5b5e64;border-radius:2px;"></div>
<div class="c" style="left:737.00px;top:753.6px;color:#d4d4d4;">, </div>
<div class="c" style="left:768.30px;top:753.6px;color:#ce9178;">&quot;Alice&quot;</div>
<div class="c" style="left:877.85px;top:753.6px;color:#d56fd3;">)</div>
<div class="c" style="left:893.50px;top:753.6px;color:#d4d4d4;">,</div>
<div class="b" style="left:641.8px;top:792px;width:250.9px;height:40px;background:#3a3d43;"></div>
<div class="b" style="left:641.8px;top:792px;width:1.5px;height:40px;background:#55585e;"></div>
<div class="b" style="left:648.1px;top:810.3px;width:4px;height:4px;background:#5b5e64;border-radius:2px;"></div>
<div class="b" style="left:663.8px;top:810.3px;width:4px;height:4px;background:#5b5e64;border-radius:2px;"></div>
<div class="b" style="left:679.4px;top:810.3px;width:4px;height:4px;background:#5b5e64;border-radius:2px;"></div>
<div class="b" style="left:695.1px;top:810.3px;width:4px;height:4px;background:#5b5e64;border-radius:2px;"></div>
<div class="c" style="left:705.70px;top:793.6px;color:#d56fd3;">(</div>
<div class="c" style="left:721.35px;top:793.6px;color:#b5cea8;">2</div>
<div class="b" style="left:757.7px;top:810.3px;width:4px;height:4px;background:#5b5e64;border-radius:2px;"></div>
<div class="c" style="left:737.00px;top:793.6px;color:#d4d4d4;">, </div>
<div class="c" style="left:768.30px;top:793.6px;color:#ce9178;">&quot;Bob&quot;</div>
<div class="c" style="left:846.55px;top:793.6px;color:#d56fd3;">)</div>
<div class="c" style="left:862.20px;top:793.6px;color:#d4d4d4;">,</div>
<div class="b" style="left:641.8px;top:832px;width:297.8px;height:40px;background:#3a3d43;"></div>
<div class="b" style="left:641.8px;top:832px;width:1.5px;height:40px;background:#55585e;"></div>
<div class="b" style="left:648.1px;top:850.3px;width:4px;height:4px;background:#5b5e64;border-radius:2px;"></div>
<div class="b" style="left:663.8px;top:850.3px;width:4px;height:4px;background:#5b5e64;border-radius:2px;"></div>
<div class="b" style="left:679.4px;top:850.3px;width:4px;height:4px;background:#5b5e64;border-radius:2px;"></div>
<div class="b" style="left:695.1px;top:850.3px;width:4px;height:4px;background:#5b5e64;border-radius:2px;"></div>
<div class="c" style="left:705.70px;top:833.6px;color:#d56fd3;">(</div>
<div class="c" style="left:721.35px;top:833.6px;color:#b5cea8;">3</div>
<div class="b" style="left:757.7px;top:850.3px;width:4px;height:4px;background:#5b5e64;border-radius:2px;"></div>
<div class="c" style="left:737.00px;top:833.6px;color:#d4d4d4;">, </div>
<div class="c" style="left:768.30px;top:833.6px;color:#ce9178;">&quot;Charlie&quot;</div>
<div class="c" style="left:909.15px;top:833.6px;color:#d56fd3;">)</div>
<div class="b" style="left:641.8px;top:872px;width:31.8px;height:40px;background:#3a3d43;"></div>
<div class="c" style="left:643.10px;top:873.6px;color:#f9d53a;">]</div>
<div class="b" style="left:641.8px;top:912px;width:16.1px;height:40px;background:#3a3d43;"></div>
<div class="b" style="left:641.8px;top:952px;width:249.0px;height:40px;background:#3a3d43;"></div>
<div class="b" style="left:663.8px;top:970.3px;width:4px;height:4px;background:#5b5e64;border-radius:2px;"></div>
<div class="b" style="left:820.3px;top:970.3px;width:4px;height:4px;background:#5b5e64;border-radius:2px;"></div>
<div class="c" style="left:643.10px;top:953.6px;color:#6d9c58;"># DataFrame </div>
<svg class="b" style="left:830.35px;top:960.20px" width="20.8" height="22.4" viewBox="-4 -4 108 108" preserveAspectRatio="none" fill="none"><path d="M27 5 C27 28 18 41 4 49 M27 21 C31 34 40 43 51 47 M63 5 V53 M87 1 V57 M63 28 H87 M52 62 A25 16 0 1 0 52.1 62 Z" stroke="#6d9c58" stroke-width="11.5" stroke-linejoin="miter"/></svg>
<svg class="b" style="left:852.85px;top:960.20px" width="20.8" height="22.4" viewBox="-4 -4 108 108" preserveAspectRatio="none" fill="none"><path d="M31 5 C31 28 21 42 5 50 M31 21 C36 34 46 43 59 48 M85 1 V57 M63 27 H85 M54 62 A26 16 0 1 0 54.1 62 Z" stroke="#6d9c58" stroke-width="11.5" stroke-linejoin="miter"/></svg>
<div class="b" style="left:641.8px;top:992px;width:767.3px;height:40px;background:#3a3d43;"></div>
<div class="b" style="left:679.4px;top:1010.3px;width:4px;height:4px;background:#5b5e64;border-radius:2px;"></div>
<div class="c" style="left:643.10px;top:993.6px;color:#d4d4d4;">df </div>
<div class="c" style="left:690.05px;top:993.6px;color:#5b9bd6;">=</div>
<div class="b" style="left:710.7px;top:1010.3px;width:4px;height:4px;background:#5b5e64;border-radius:2px;"></div>
<div class="c" style="left:705.70px;top:993.6px;color:#d4d4d4;"> spark.</div>
<div class="c" style="left:815.25px;top:993.6px;color:#dcdcaa;">createDataFrame</div>
<div class="c" style="left:1050.00px;top:993.6px;color:#f9d53a;">(</div>
<div class="b" style="left:1148.9px;top:1010.3px;width:4px;height:4px;background:#5b5e64;border-radius:2px;"></div>
<div class="c" style="left:1065.65px;top:993.6px;color:#d4d4d4;">data, </div>
<div class="c" style="left:1159.55px;top:993.6px;color:#d56fd3;">[</div>
<div class="c" style="left:1175.20px;top:993.6px;color:#ce9178;">&quot;id&quot;</div>
<div class="b" style="left:1258.5px;top:1010.3px;width:4px;height:4px;background:#5b5e64;border-radius:2px;"></div>
<div class="c" style="left:1237.80px;top:993.6px;color:#d4d4d4;">, </div>
<div class="c" style="left:1269.10px;top:993.6px;color:#ce9178;">&quot;name&quot;</div>
<div class="c" style="left:1363.00px;top:993.6px;color:#d56fd3;">]</div>
<div class="c" style="left:1378.65px;top:993.6px;color:#f9d53a;">)</div>
<div class="b" style="left:641.8px;top:1032px;width:16.1px;height:40px;background:#3a3d43;"></div>
<div class="b" style="left:641.8px;top:1072px;width:92.5px;height:40px;background:#3a3d43;"></div>
<div class="b" style="left:663.8px;top:1090.3px;width:4px;height:4px;background:#5b5e64;border-radius:2px;"></div>
<div class="c" style="left:643.10px;top:1073.6px;color:#6d9c58;"># </div>
<svg class="b" style="left:673.85px;top:1080.20px" width="20.8" height="22.4" viewBox="-4 -4 108 108" preserveAspectRatio="none" fill="none"><path d="M50 0 V9 M22 11 H78 M50 12 C48 25 36 32 14 38 M50 18 C56 28 68 33 86 37 M5 49 H95 M50 49 V60 M21 66 H79 V79 H21 V94 H82" stroke="#6d9c58" stroke-width="11.5" stroke-linejoin="miter"/></svg>
<svg class="b" style="left:696.35px;top:1080.20px" width="20.8" height="22.4" viewBox="-4 -4 108 108" preserveAspectRatio="none" fill="none"><path d="M9 8 H51 V27 H9 V47 H54 M85 1 V59 M64 20 H85 M64 39 H85 M21 68 H83 V99" stroke="#6d9c58" stroke-width="11.5" stroke-linejoin="miter"/></svg>
<div class="b" style="left:641.8px;top:1112px;width:157.0px;height:40px;background:#3a3d43;"></div>
<div class="c" style="left:643.10px;top:1113.6px;color:#d4d4d4;">df.</div>
<div class="c" style="left:690.05px;top:1113.6px;color:#dcdcaa;">show</div>
<div class="c" style="left:752.65px;top:1113.6px;color:#f9d53a;">()</div>
<div class="b" style="left:641.8px;top:1152px;width:16.1px;height:40px;background:#3a3d43;"></div>
<div class="b" style="left:641.8px;top:1192px;width:186.3px;height:40px;background:#3a3d43;"></div>
<div class="b" style="left:663.8px;top:1210.3px;width:4px;height:4px;background:#5b5e64;border-radius:2px;"></div>
<div class="b" style="left:757.7px;top:1210.3px;width:4px;height:4px;background:#5b5e64;border-radius:2px;"></div>
<div class="c" style="left:643.10px;top:1193.6px;color:#6d9c58;"># Spark </div>
<svg class="b" style="left:767.75px;top:1200.20px" width="20.8" height="22.4" viewBox="-4 -4 108 108" preserveAspectRatio="none" fill="none"><path d="M17 7 H83 M50 7 C48 22 36 30 12 36 M51 15 C58 26 70 31 88 35 M50 40 V53 M5 54 H95 M50 65 A27 14 0 1 0 50.1 65 Z" stroke="#6d9c58" stroke-width="11.5" stroke-linejoin="miter"/></svg>
<svg class="b" style="left:790.25px;top:1200.20px" width="20.8" height="22.4" viewBox="-4 -4 108 108" preserveAspectRatio="none" fill="none"><path d="M17 6 H81 V25 H17 V45 H84 M36 56 V83 M64 56 V83 M5 85 H95" stroke="#6d9c58" stroke-width="11.5" stroke-linejoin="miter"/></svg>
<div class="b" style="left:641.8px;top:1232px;width:188.3px;height:40px;background:#3a3d43;"></div>
<div class="c" style="left:643.10px;top:1233.6px;color:#d4d4d4;">spark.</div>
<div class="c" style="left:737.00px;top:1233.6px;color:#dcdcaa;">stop</div>
<div class="c" style="left:799.60px;top:1233.6px;color:#f9d53a;">()</div>
<svg class="b" style="left:595.3px;top:1284.5px;" width="32" height="32" viewBox="0 0 16 16" fill="none"><path d="M6.03 4.53L9.5 8l-3.47 3.47" stroke="#8fa1b3" stroke-width="1.5" stroke-linejoin="miter" /></svg>
<svg class="b" style="left:642px;top:1284px;" width="31" height="31" viewBox="0 0 16 16" fill="none"><path d="M1.35 .6v13.55h13.9 M4.6 4v7.6 M7.4 .9v10.7 M10.2 5.4v6.2 M13 8.2v3.4" stroke="#5a9fe3" stroke-width="1.45" stroke-linejoin="miter" /></svg>
<div class="t" style="left:681.40px;top:1286.96px;font-size:26.5px;line-height:26.5px;color:#5a9fe3;letter-spacing:0.251px;">See performance (1)</div>
<svg class="b" style="left:587.0px;top:1339.2px;" width="32" height="32" viewBox="0 0 16 16" fill="none"><path d="M6.03 4.53L9.5 8l-3.47 3.47" stroke="#a9b1b9" stroke-width="1.5" stroke-linejoin="miter" /></svg>
<svg class="b" style="left:621.0px;top:1342.3px;" width="28" height="28" viewBox="0 0 16 16" fill="none"><path d="M1.1 2.6h13.8v10.8h-13.8z" stroke="#a9b1b9" stroke-width="1.4" stroke-linejoin="miter" /><path d="M1.1 2.6h13.8v2.6h-13.8z M3 6.6h1.3v1.2h-1.3z M5.4 6.6h7.6v1.2h-7.6z M3 8.8h1.3v1.2h-1.3z M5.4 8.8h7.6v1.2h-7.6z M3 11h1.3v1.2h-1.3z M5.4 11h7.6v1.2h-7.6z" fill="#a9b1b9" /></svg>
<div class="t" style="left:666.69px;top:1342.56px;font-size:26.5px;line-height:26.5px;color:#b1b5b9;letter-spacing:2.535px;-webkit-text-stroke:0.4px #b1b5b9;">df:</div>
<div class="t" style="left:714.59px;top:1342.56px;font-size:26.5px;line-height:26.5px;color:#b1b5b9;letter-spacing:0.429px;-webkit-text-stroke:0.4px #b1b5b9;">pyspark.sql.connect.dataframe.DataFrame</div>
<div class="c" style="left:579.3px;top:1391.2px;color:#e8ecf0;letter-spacing:-0.06px;-webkit-text-stroke:0.55px currentColor">+−−−+−−−−−−−+</div>
<div class="c" style="left:579.3px;top:1429.0px;color:#e8ecf0;letter-spacing:-0.06px;-webkit-text-stroke:0.55px currentColor">| id|   name|</div>
<div class="c" style="left:579.3px;top:1466.9px;color:#e8ecf0;letter-spacing:-0.06px;-webkit-text-stroke:0.55px currentColor">+−−−+−−−−−−−+</div>
<div class="c" style="left:579.3px;top:1504.7px;color:#e8ecf0;letter-spacing:-0.06px;-webkit-text-stroke:0.55px currentColor">|  1|  Alice|</div>
<div class="c" style="left:579.3px;top:1542.5px;color:#e8ecf0;letter-spacing:-0.06px;-webkit-text-stroke:0.55px currentColor">|  2|    Bob|</div>
<div class="c" style="left:579.3px;top:1580.3px;color:#e8ecf0;letter-spacing:-0.06px;-webkit-text-stroke:0.55px currentColor">|  3|Charlie|</div>
<div class="c" style="left:579.3px;top:1618.2px;color:#e8ecf0;letter-spacing:-0.06px;-webkit-text-stroke:0.55px currentColor">+−−−+−−−−−−−+</div>
<div class="c" style="left:978px;width:1000px;text-align:center;top:1769.3px;color:#a9adb1;font-size:22px;line-height:36px;letter-spacing:0">[Shift+Enter] to run and move to next cell</div>
<div class="c" style="left:978px;width:1000px;text-align:center;top:1805.3px;color:#a9adb1;font-size:22px;line-height:36px;letter-spacing:0">[Cmd+Shift+P] to open the command palette</div>
<div class="c" style="left:978px;width:1000px;text-align:center;top:1841.3px;color:#a9adb1;font-size:22px;line-height:36px;letter-spacing:0">[Esc H] to see all keyboard shortcuts</div>
</div>
</body></html>
